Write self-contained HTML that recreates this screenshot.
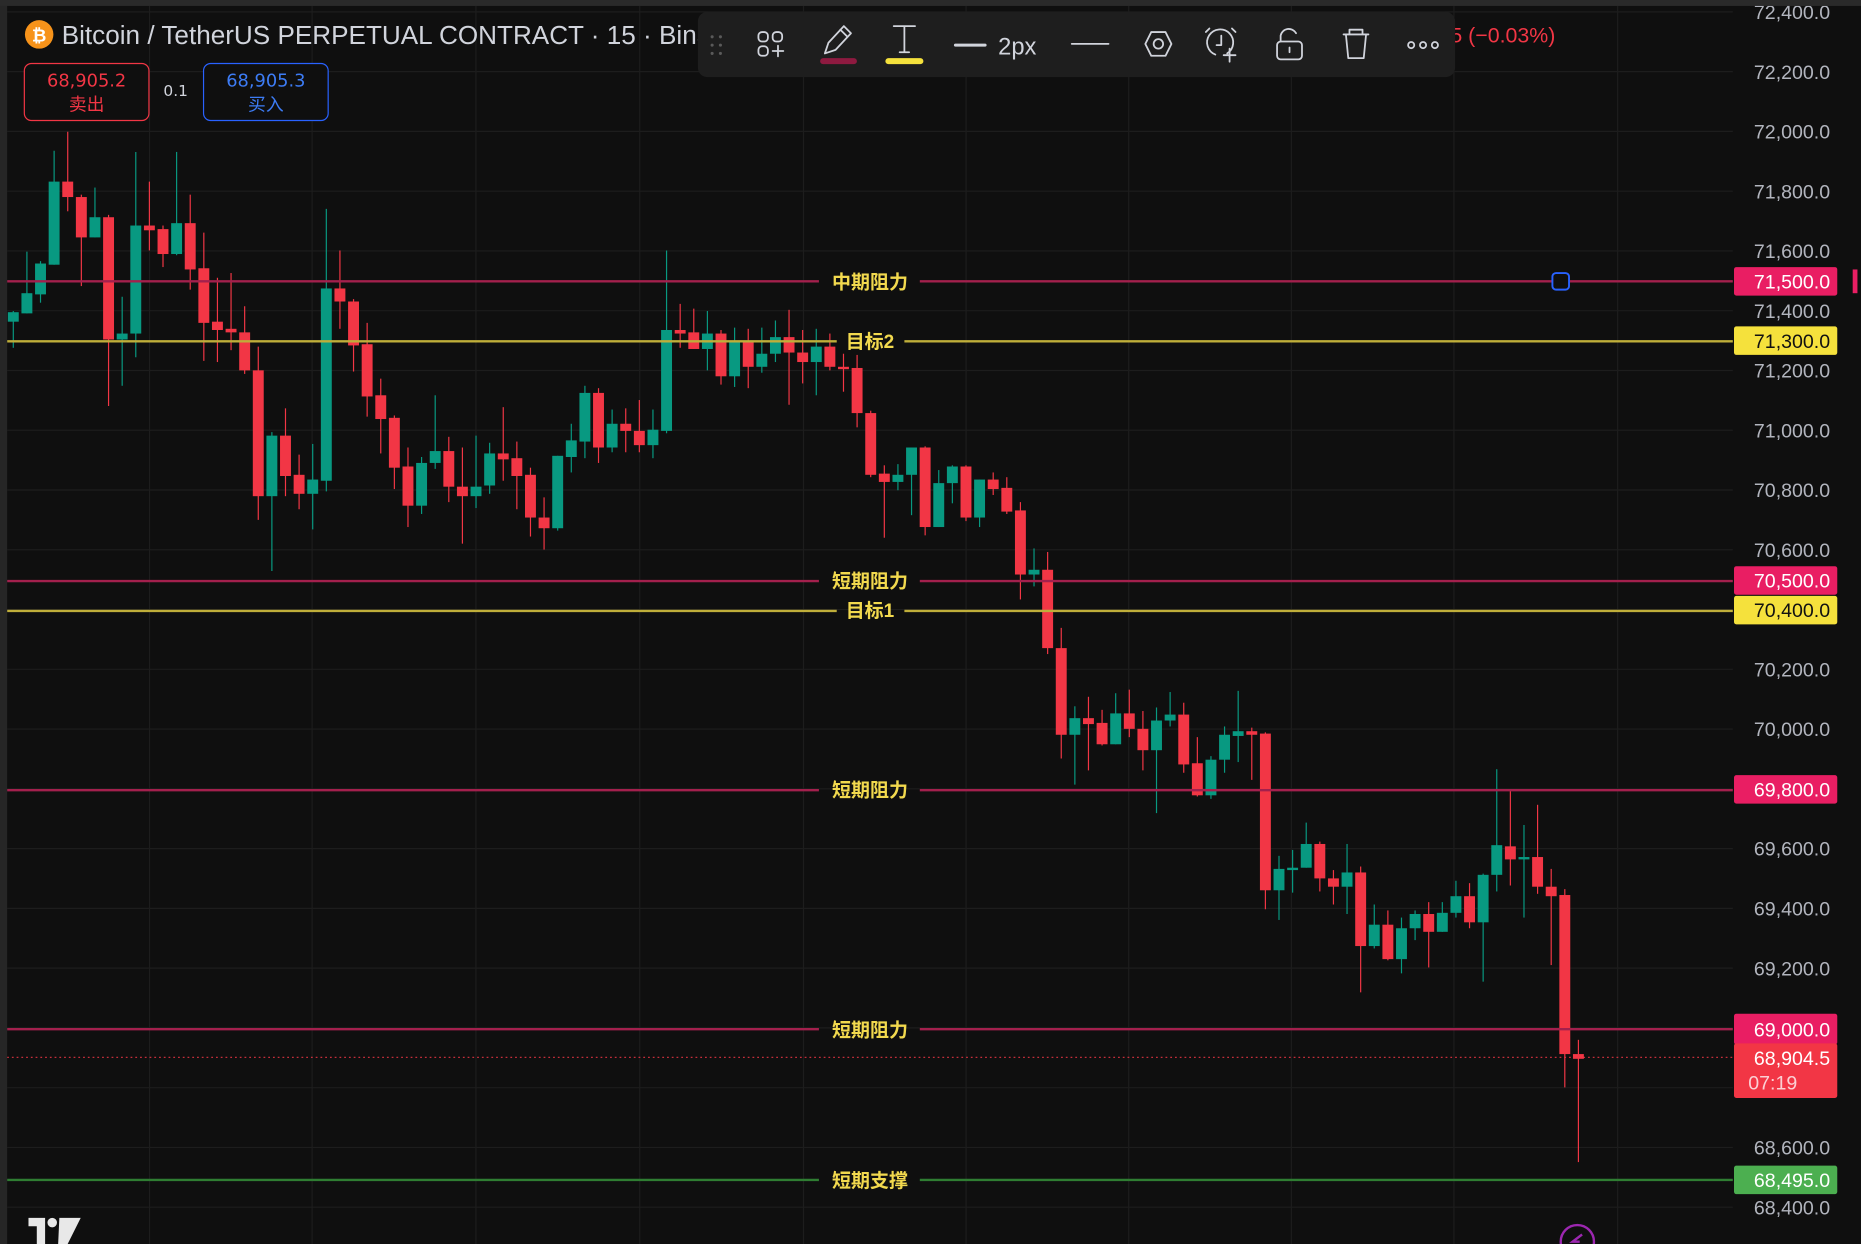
<!DOCTYPE html>
<html><head><meta charset="utf-8"><style>
html,body{margin:0;padding:0;background:#0f0f0f;overflow:hidden}
svg{display:block}
text{font-family:"Liberation Sans","Noto Sans CJK SC",sans-serif}
.dj{font-family:"DejaVu Sans","Noto Sans CJK SC",sans-serif}
</style></head><body>
<svg id="s" xmlns="http://www.w3.org/2000/svg" width="1861" height="1244" viewBox="0 0 1568 1048" preserveAspectRatio="none">
<rect width="1568" height="1048" fill="#0f0f0f"/>
<g id="grid" stroke="#1d1d1d" stroke-width="1"></g>
<g id="candles"></g>
<g stroke-width="2">
<line x1="6" y1="237" x2="690" y2="237" stroke="#a3204d"/><line x1="775" y1="237" x2="1460" y2="237" stroke="#a3204d"/>
<line x1="6" y1="287.5" x2="705" y2="287.5" stroke="#bfae3a"/><line x1="762" y1="287.5" x2="1460" y2="287.5" stroke="#bfae3a"/>
<line x1="6" y1="489.5" x2="690" y2="489.5" stroke="#a3204d"/><line x1="775" y1="489.5" x2="1460" y2="489.5" stroke="#a3204d"/>
<line x1="6" y1="514.7" x2="705" y2="514.7" stroke="#bfae3a"/><line x1="762" y1="514.7" x2="1460" y2="514.7" stroke="#bfae3a"/>
<line x1="6" y1="665.7" x2="690" y2="665.7" stroke="#a3204d"/><line x1="775" y1="665.7" x2="1460" y2="665.7" stroke="#a3204d"/>
<line x1="6" y1="867" x2="690" y2="867" stroke="#a3204d"/><line x1="775" y1="867" x2="1460" y2="867" stroke="#a3204d"/>
<line x1="6" y1="994" x2="690" y2="994" stroke="#2f7d32"/><line x1="775" y1="994" x2="1460" y2="994" stroke="#2f7d32"/>
</g>
<line x1="6" y1="890.8" x2="1460" y2="890.8" stroke="#f23645" stroke-width="1" stroke-dasharray="1.5 2.5" opacity="0.8"/>
<g fill="#f2d94e" font-size="16" font-weight="bold" text-anchor="middle">
<text x="733" y="243">中期阻力</text>
<text x="733" y="293">目标2</text>
<text x="733" y="495">短期阻力</text>
<text x="733" y="520">目标1</text>
<text x="733" y="671">短期阻力</text>
<text x="733" y="873">短期阻力</text>
<text x="733" y="1000">短期支撑</text>
</g>
<rect x="1308" y="230" width="14" height="14" rx="3" fill="#0f0f0f" stroke="#2962ff" stroke-width="1.6"/>
<g id="axis" class="dj" fill="#b2b5be" font-size="16.5" text-anchor="end"></g>
<g class="dj" font-size="16.5" text-anchor="end">
<rect x="1461" y="225" width="87" height="24" rx="2" fill="#e91e63"/><text x="1542" y="243" fill="#fff">71,500.0</text>
<rect x="1461" y="275" width="87" height="24" rx="2" fill="#f5e13c"/><text x="1542" y="293" fill="#111">71,300.0</text>
<rect x="1461" y="477" width="87" height="24" rx="2" fill="#e91e63"/><text x="1542" y="495" fill="#fff">70,500.0</text>
<rect x="1461" y="502" width="87" height="24" rx="2" fill="#f5e13c"/><text x="1542" y="520" fill="#111">70,400.0</text>
<rect x="1461" y="653" width="87" height="24" rx="2" fill="#e91e63"/><text x="1542" y="671" fill="#fff">69,800.0</text>
<rect x="1461" y="854" width="87" height="26" rx="2" fill="#e91e63"/><text x="1542" y="873" fill="#fff">69,000.0</text>
<rect x="1461" y="879" width="87" height="46" rx="2" fill="#f23645"/><text x="1542" y="897" fill="#fff">68,904.5</text><text x="1473" y="918" fill="#fbd0d4" text-anchor="start">07:19</text>
<rect x="1461" y="982" width="87" height="24" rx="2" fill="#4caf50"/><text x="1542" y="1000" fill="#fff">68,495.0</text>
</g>
<rect x="1561" y="227" width="4" height="20" fill="#e91e63"/>
<rect x="0" y="0" width="6" height="1048" fill="#262626"/>
<rect x="0" y="0" width="1568" height="5" fill="#2a2a2a"/>
<circle cx="33" cy="29" r="12" fill="#f7931a"/><text x="33" y="35" fill="#fff" font-size="15" font-weight="bold" text-anchor="middle">₿</text>
<text x="52" y="37" fill="#d1d4dc" font-size="22">Bitcoin / TetherUS PERPETUAL CONTRACT · 15 · Binance</text>
<text x="1222" y="36" fill="#f23645" font-size="18">5 (−0.03%)</text>
<rect x="20.5" y="53.5" width="105" height="48" rx="6" fill="#0f0f0f" stroke="#f23645"/>
<text class="dj" x="73" y="73" fill="#f23645" font-size="15" text-anchor="middle">68,905.2</text>
<text x="73" y="93" fill="#f23645" font-size="15" text-anchor="middle">卖出</text>
<text class="dj" x="148" y="81" fill="#d1d4dc" font-size="13" text-anchor="middle">0.1</text>
<rect x="171.5" y="53.5" width="105" height="48" rx="6" fill="#0f0f0f" stroke="#2962ff"/>
<text class="dj" x="224" y="73" fill="#3d7cf5" font-size="15" text-anchor="middle">68,905.3</text>
<text x="224" y="93" fill="#3d7cf5" font-size="15" text-anchor="middle">买入</text>
<rect x="588" y="10" width="638" height="55" rx="8" fill="#1e1e1e"/>
<g fill="#5a5a5a"><circle cx="600" cy="31" r="1.3"/><circle cx="607" cy="31" r="1.3"/><circle cx="600" cy="38" r="1.3"/><circle cx="607" cy="38" r="1.3"/><circle cx="600" cy="45" r="1.3"/><circle cx="607" cy="45" r="1.3"/></g>
<g fill="none" stroke="#d1d4dc" stroke-width="1.5" stroke-linecap="round" stroke-linejoin="round">
<rect x="639" y="27" width="8" height="8" rx="3"/><rect x="651" y="27" width="8" height="8" rx="3"/><rect x="639" y="39" width="8" height="8" rx="3"/><path d="M651 43h9M655.5 38.5v9"/>
<path d="M695 45l3-9 13-14 6 6-13 14z M708 25l6 6"/>
<path d="M753 22h18 M762 22v22 M758 44h8"/>
<path d="M805 38h25" stroke-width="2.5"/>
<path d="M903 37h31"/>
<path d="M965 37l5-10h12l5 10-5 10h-12z"/><circle cx="976" cy="37" r="4"/>
<path d="M1024 46a11 11 0 1 1 10 -1 M1029 30v8h-4 M1036 41v11 M1031 46.5h10 M1019 24l-3 3 M1038 24l3 3"/>
<rect x="1076" y="35" width="21" height="15" rx="3"/><path d="M1079 35v-5a7 7 0 0 1 13 -2 M1086.5 40v4"/>
<path d="M1132 29h21 M1137 29v-4h11v4 M1134 29l2 20h13l2 -20"/>
<circle cx="1189" cy="38" r="2.6"/><circle cx="1199" cy="38" r="2.6"/><circle cx="1209" cy="38" r="2.6"/>
</g>
<rect x="691" y="49" width="31" height="5" rx="2.5" fill="#8e1a40"/>
<rect x="746" y="49" width="32" height="5" rx="2.5" fill="#f5e13c"/>
<text x="841" y="46" fill="#d1d4dc" font-size="20">2px</text>
<g fill="#e8e8e8"><path d="M24 1026h14v22h-7v-15h-7z"/><circle cx="44" cy="1030" r="4"/><path d="M50 1026h18l-11 22h-8z"/></g>
<circle cx="1329" cy="1046" r="14" fill="none" stroke="#9c27b0" stroke-width="2"/>
<path d="M1333 1040l-8 6h6" fill="none" stroke="#9c27b0" stroke-width="2"/>
</svg>
<script>
var NS="http://www.w3.org/2000/svg";
function el(t,a,p){var e=document.createElementNS(NS,t);for(var k in a)e.setAttribute(k,a[k]);p.appendChild(e);return e;}
var g=document.getElementById('grid');
for(var k=0;k<=20;k++){var y=10+k*50.35;el('line',{x1:6,y1:y,x2:1460,y2:y},g);}
[126,263,401,539,677,814,951,1088,1225,1363].forEach(function(x){el('line',{x1:x,y1:0,x2:x,y2:1048},g);});
var ax=document.getElementById('axis');
for(var k=0;k<=20;k++){var p=72400-k*200;var s=p.toString();s=s.slice(0,2)+','+s.slice(2)+'.0';var t=el('text',{x:1542,y:10+k*50.35+6},ax);t.textContent=s;}
var C=[[271,263,262,293],[264,247,212,264],[248,222,220,255],[223,153,127,223],[153,166,111,178],[166,200,164,241],[200,183,158,200],[183,286,181,342],[286,281,250,325],[281,190,128,301],
[190,194,153,211],[193,214,190,225],[214,188,128,215],[188,227,164,244],[226,272,196,304],[271,278,234,305],[277,280,230,295],[280,312,258,315],[312,418,292,438],[418,367,364,481],
[367,401,344,418],[400,416,383,429],[416,404,374,446],[405,243,176,414],[243,254,211,277],[254,291,252,313],[290,334,272,351],[333,353,319,382],[352,394,350,412],[393,426,377,444],
[426,390,385,433],[390,380,333,395],[380,410,368,423],[410,418,377,458],[418,410,367,428],[409,382,373,416],[382,387,343,405],[386,401,372,429],[400,436,394,452],[436,445,419,463],
[445,384,384,447],[385,371,357,398],[372,331,325,386],[331,377,327,390],[377,357,345,381],[357,363,344,381],[363,375,337,381],[375,362,345,386],[363,278,211,365],[278,281,256,293],
[280,294,260,294],[294,281,262,312],[281,317,278,324],[317,288,276,326],[288,309,277,327],[309,298,276,314],[298,284,270,305],[284,297,261,341],[297,305,278,323],[305,292,277,333],
[292,309,281,312],[309,311,298,330],[310,348,299,360],[348,400,346,402],[399,406,392,453],[406,400,391,413],[400,377,377,434],[377,444,376,451],[444,407,396,444],[407,393,392,424],
[393,436,392,439],[436,404,404,444],[404,412,398,417],[411,431,402,433],[430,484,423,505],[484,480,462,494],[480,546,465,551],[546,619,529,639],[619,605,595,661],[605,610,587,649],
[609,627,598,628],[627,601,584,627],[601,614,581,621],[614,632,599,649],[632,607,596,685],[607,602,583,612],[602,644,592,651],[643,670,621,671],[670,640,637,673],[640,619,612,651],
[620,616,582,642],[616,619,613,657],[618,750,617,766],[750,732,721,775],[733,731,716,752],[731,711,693,731],[711,740,709,751],[740,747,733,762],[747,735,711,770],[735,797,730,836],
[797,779,762,799],[779,808,767,809],[808,782,773,820],[782,770,767,792],[770,785,760,815],[785,769,760,785],[769,755,742,773],[755,777,744,782],[777,737,736,827],[737,712,648,751],
[713,724,666,746],[724,722,695,773],[722,747,678,753],[747,755,732,813],[754,888,749,916],[888,892,876,979]];
var cg=document.getElementById('candles');
C.forEach(function(c,i){var x=11.2+11.467*i;var col=c[1]<c[0]?'#089981':'#f23645';
el('line',{x1:x,y1:c[2],x2:x,y2:c[3],stroke:col,'stroke-width':1},cg);
var t=Math.min(c[0],c[1]),h=Math.max(1.8,Math.abs(c[0]-c[1]));
el('rect',{x:x-4.6,y:t,width:9.2,height:h,fill:col},cg);});
</script>
</body></html>
